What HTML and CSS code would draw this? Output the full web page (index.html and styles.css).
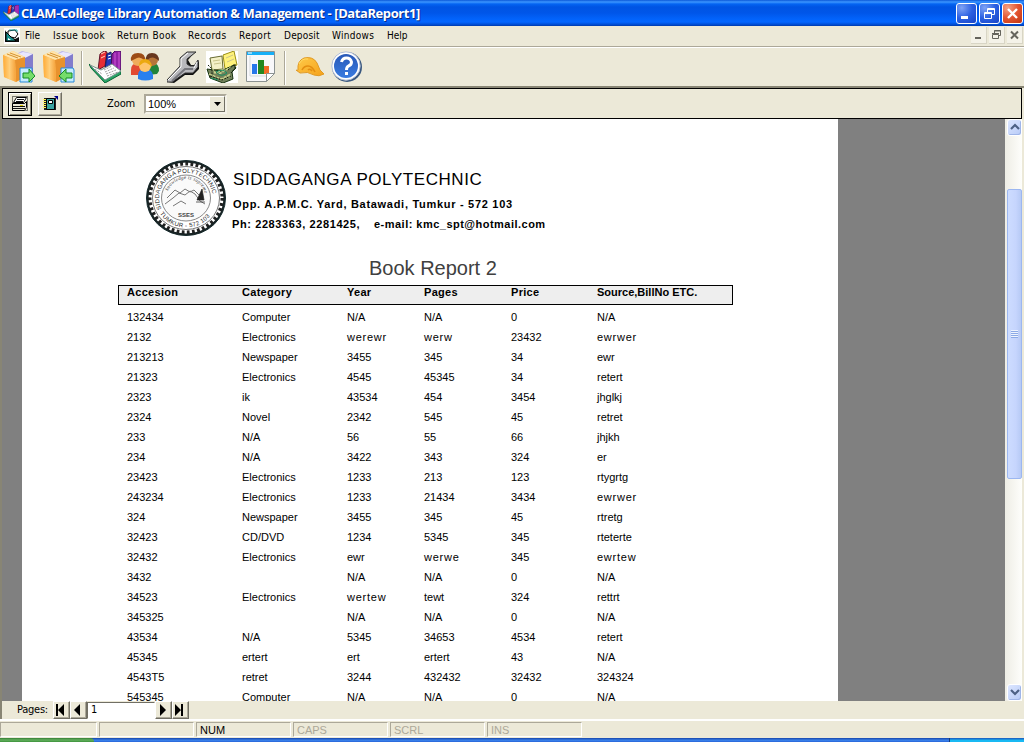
FILE: index.html
```html
<!DOCTYPE html>
<html lang="en">
<head>
<meta charset="utf-8">
<title>CLAM-College Library Automation &amp; Management</title>
<link rel="stylesheet" href="styles.css">
</head>
<body>
<div class="window">
  <header class="titlebar">
    <svg class="app-icon" width="16" height="16" viewBox="0 0 32 32"><use href="#books"/></svg>
    <span class="title">CLAM-College Library Automation &amp; Management - [DataReport1]</span>
    <div class="win-buttons">
      <span class="wb"><svg width="19" height="19"><path d="M4 12h7v3H4z" fill="#fff"/></svg></span>
      <span class="wb"><svg width="19" height="19" fill="none" stroke="#fff"><path d="M4.500 8.500h7v6h-7zM4 9.500h8M7.500 8V4.500h7v6H12M7 5.500h8"/></svg></span>
      <span class="wb close"><svg width="19" height="19"><path d="M5 5l9 9M14 5l-9 9" stroke="#fff" stroke-width="2.400"/></svg></span>
    </div>
  </header>

  <nav class="menubar">
    <svg class="doc-icon" width="16" height="16"><path fill="#fff" d="M0 0h16v16H0z"/><path d="M1 2v12h14V9L7 13z" fill="#111"/><path d="M2 4l10 9H2z" fill="#168f8c" stroke="#000"/><path d="M4 10v2h3z" fill="#fff"/><path d="M4 3l7-1 3 4-3 4-4-1-3-3z" fill="#fff" stroke="#000"/><path d="M5 2h8v2" stroke="#20a9a5" fill="none"/></svg>
    <span class="m1">File</span><span class="m2">Issue book</span><span class="m3">Return Book</span><span class="m4">Records</span><span class="m5">Report</span><span class="m6">Deposit</span><span class="m7">Windows</span><span class="m8">Help</span>
    <div class="mdi-buttons">
      <span class="mb"><svg width="16" height="17"><path d="M4 10h6v2H4z" fill="#65645c"/></svg></span>
      <span class="mb"><svg width="16" height="17" fill="none" stroke="#65645c"><path d="M3.500 7.500h6v4h-6zM3 6.500h7M5.500 6V3.500h6v5H10M5 4h7"/></svg></span>
      <span class="mb"><svg width="16" height="17"><path d="M4 4.500l7 7M11 4.500l-7 7" stroke="#65645c" stroke-width="2"/></svg></span>
    </div>
  </nav>

  <div class="toolbar">
    <svg class="tool" width="32" height="32" viewBox="0 0 32 32">
      <g id="boxes"><path d="M12 4l7-4 11 3v20l-8 5-9-5z" fill="#b9b5ee"/><path d="M12 4l8-3 10 2-7 4z" fill="#e9e7ff"/><path d="M22 7l8-4v20l-8 5z" fill="#827dcc"/><path d="M0 4l10-4 12 6v20l-9 5L1 26z" fill="#ffc76a"/><path d="M0 4l10-4 12 6-10 3z" fill="#ffe5ad"/><path d="M12 9l10-3v20l-9 5z" fill="#e8922d"/><path d="M0 4l12 5 1 22L1 26z" fill="url(#orange)"/><path d="M4 3l11 4M7 2l11 4" stroke="#d6922f" fill="none"/></g>
      <path d="M17 17h12v14H17z" fill="#c6ecff" stroke="#2788d8"/><path d="M20 22h6v-4l6 7-6 6v-4h-6z" fill="#75dd6b" stroke="#158b25"/>
    </svg>
    <svg class="tool t2" width="32" height="32" viewBox="0 0 32 32"><use href="#boxes"/><path d="M18 17h12l1 2v12H18z" fill="#c6ecff" stroke="#2788d8"/><path d="M29 22h-6v-4l-7 7 7 6v-4h6z" fill="#75dd6b" stroke="#158b25"/></svg>
    <i class="sep"></i>
    <svg class="tool t3" width="32" height="32" viewBox="0 0 32 32">
      <g id="books"><path d="M11 3l4-3 3 1-2 14-7 4z" fill="#e72e35" stroke="#61152c"/><path d="M12 3l4-2M12 7l4-2" stroke="#ffd5bd"/><path d="M18 3l4-2 1 13-7 5z" fill="#2739b8" stroke="#111a64"/><path d="M19 5l3-1M19 8l3-1" stroke="#fff"/><path d="M23 3l3-3h6v18l-6 4-4-4z" fill="#9322a8" stroke="#46105a"/><path d="M26 2v18M30 1v18" stroke="#ce57d5"/><path d="M0 13l15 14 17-8v4L16 32 2 17z" fill="#28a565" stroke="#086337"/><path d="M1 14l11 5L23 13l9 7-16 9z" fill="#fff" stroke="#78928c"/><path d="M15 19l8-4M16 21l9-4M17 23l10-4M18 25l11-4M6 18l7 5" stroke="#888" stroke-width=".8" stroke-dasharray="2 1"/></g>
    </svg>
    <svg class="tool t4" width="32" height="32" viewBox="0 0 32 32"><path d="M1 24v-5q0-7 7-7t7 7v5z" fill="#e24a32"/><circle cx="8" cy="9" r="6" fill="#efac5b"/><path d="M1 10Q0 2 8 2t7 8Q10 4 5 8z" fill="#9d4c16"/><path d="M16 21v-3q1-6 7-6t6 8l-2 3-9 1z" fill="#21843a"/><circle cx="22" cy="9" r="6" fill="#b57439"/><path d="M16 10q-1-8 6-8t7 8q-5-5-9-3z" fill="#67371f"/><path d="M8 28v-4q0-6 7-6t8 6v4q-8 3-15 0z" fill="#2980ee"/><circle cx="15" cy="15" r="6" fill="#ffc56b"/><path d="M9 15q0-7 6-7t7 8q-6-6-9-4z" fill="#eca90f"/></svg>
    <svg class="tool t5" width="32" height="32" viewBox="0 0 32 32"><path d="M1 31l14-13-1-9 8-8h6l-7 8 3 5h6l2-5v9l-6 6h-8L7 32z" fill="#111"/><path d="M0 29l13-14V7l7-6h9l-9 7v5l3 2h4l4-6v7l-5 6h-8L5 31H0z" fill="#b9b9bd" stroke="#333"/><path d="M1 29l13-13V8l7-6M27 17l3-6" stroke="#fff" fill="none"/><path d="M5 30l13-12h8" stroke="#77777d" stroke-width="2" fill="none"/></svg>
    <svg class="tool t6" width="32" height="32" viewBox="0 0 32 32"><path fill="#fff" d="M0 0h32v32H0z"/><path d="M17 4l11-4 3 14-12 4z" fill="#fff27a" stroke="#9a8e17"/><path d="M4 7l12-2 1 13-11 1z" fill="#f4f1c7" stroke="#676b32"/><path d="M7 10l7-1M8 13l7-1M20 7l7-3M21 11l7-3" stroke="#c9c48a"/><path d="M1 18l14 2 13-6 2 3-4 4 1 7-10 4-13-5z" fill="#71815a" stroke="#17320f"/><path d="M3 23l12 5 10-5M6 17l3 5 10-4M13 23l12-7M17 28l8-3" stroke="#c9d08c" stroke-width="1.500" fill="none" stroke-dasharray="3 1"/><path d="M2 14l4 4v5M22 19l7-6v4l-4 5M4 25l12 4 9-4" stroke="#101b0b" fill="none" stroke-dasharray="2 1"/><path d="M10 21q7-4 11 1q-6 5-11-1M5 27l7 2" fill="none" stroke="#178e63"/></svg>
    <svg class="tool t7" width="32" height="32" viewBox="0 0 32 32"><path d="M.5.500h28v22l-8 8H.5z" fill="#f8f8fa" stroke="#8b9291"/><path d="M1 1h27v3H1z" fill="#17aff7"/><path d="M2 2h4" stroke="#fff"/><path d="M4 5v20h20" fill="none" stroke="#d5d9dd"/><path d="M6 13h5v10H6z" fill="#2877e9"/><path d="M12 9h6v14h-6z" fill="#268720"/><path d="M18 15h5v8h-5z" fill="#f26c27"/><path d="M20.500 30.500v-8h8z" fill="#fff" stroke="#8b9291"/></svg>
    <i class="sep s2"></i>
    <svg class="tool t8" width="32" height="32" viewBox="0 0 32 32"><path d="M4 19q-1-9 6-12 9-2 13 5l3 7 4 4q-5 3-10 1-6-4-14-2l-4-3q1 1 2 0z" fill="url(#helmet)" stroke="#e09a25"/><path d="M8 19q2-4 6-4t7 6M14 19q2-2 4 1" fill="none" stroke="#e48e11" stroke-width="1.600"/><path d="M5 13q3-6 9-5" stroke="#ffdc67" fill="none"/></svg>
    <svg class="tool t9" width="32" height="32" viewBox="0 0 32 32"><circle cx="16" cy="16" r="15" fill="#38577f"/><circle cx="15" cy="15" r="14.200" fill="#fff" stroke="#b2bdd3"/><circle cx="15" cy="15" r="12" fill="url(#help)"/><path d="M10.500 11q1-4 5-4t5 4q0 3-3 4-2 1-2 4" fill="none" stroke="#fff" stroke-width="3"/><path d="M14 21h3v3h-3z" fill="#fff"/></svg>
    <svg width="0" height="0"><defs><linearGradient id="orange" x2="1"><stop stop-color="#ffab35"/><stop offset=".5" stop-color="#ffcf7b"/><stop offset="1" stop-color="#f5a037"/></linearGradient><linearGradient id="helmet" x2="1" y2="1"><stop stop-color="#ffca49"/><stop offset="1" stop-color="#f5a21b"/></linearGradient><linearGradient id="help" x2="0" y2="1"><stop stop-color="#2858b7"/><stop offset="1" stop-color="#397be0"/></linearGradient></defs></svg>
  </div>

  <section class="report">
    <div class="report-bar">
      <span class="rb print"><svg width="22" height="22"><path d="M3.500 3.500h15v14h-15z" fill="none" stroke="#000" stroke-dasharray="1 1"/><path d="M7.500 4.500h10l-3 5h-10z" fill="#fff" stroke="#000"/><path d="M3.500 10.500h12l2-2v6l-2 3h-12z" fill="#ece9d8" stroke="#000"/><path d="M8 6.500h7M7 8.500h7M4 13.500h12M4 15.500h12" stroke="#111"/><path d="M11 12.500h3" stroke="#d8c300"/></svg></span>
      <span class="rb export"><svg width="22" height="22"><path d="M5 5h12v12H5z" fill="#222"/><path d="M7.500 5.500h8v11h-8z" fill="#39a3a1" stroke="#000"/><path d="M9.500 7.500h4v3h-4z" fill="#fff" stroke="#000"/><path d="M4 6.500h3M4 8.500h3M4 10.500h3M4 12.500h3M4 14.500h3" stroke="#fff35a"/><path d="M15 3h4v4z" fill="#00008c"/></svg></span>
      <label class="zoom-label">Zoom</label>
      <div class="combo"><span>100%</span><b><svg width="14" height="14"><path d="M4 5h7L7.500 9z"/></svg></b></div>
    </div>
    <div class="viewer">
      <main class="canvas"><article class="page">
        <div class="letterhead">
          <svg class="seal" width="82" height="78" viewBox="0 0 82 78">
            <defs><path id="arc" d="M16.500 50A27 25.500 0 1 1 65.500 50"/><path id="low" d="M13 51A30.500 29 0 0 0 69 51"/><path id="inner" d="M22 38A19 18 0 0 1 60 38"/></defs>
            <ellipse cx="41" cy="39" rx="39.500" ry="37.500" fill="#fff" stroke="#163034"/><ellipse cx="41" cy="39" rx="36.500" ry="34.500" fill="none" stroke="#222" stroke-width="4" stroke-dasharray="2.800 2.400"/><ellipse cx="41" cy="39" rx="38.500" ry="36.500" fill="none" stroke="#172324" stroke-width="2"/><ellipse cx="41" cy="39" rx="33.500" ry="31.500" fill="#fff" stroke="#777"/><ellipse cx="41" cy="39" rx="24.500" ry="23" fill="#fafafa" stroke="#888"/>
            <text class="seal-text"><textPath href="#arc">SIDDAGANGA POLYTECHNIC</textPath></text><text class="seal-low"><textPath href="#low" startOffset="4">TUMKUR - 572 103</textPath></text><text class="seal-small"><textPath href="#inner" startOffset="6">knowledge is supreme</textPath></text>
            <path d="M20 45l8-6 6-5 6 2 5-4 5 3 5 7 5 3M22 39l8-8 5 3 5-4 5 3 4-2 5 5M28 47l8-5 5 3" fill="none" stroke="#777"/><path d="M57 30l-5 11h7zM51 43h9" fill="#222" stroke="#222" stroke-width=".7"/><text class="seal-sses" x="33" y="58">SSES</text>
          </svg>
          <div class="college"><h1>SIDDAGANGA POLYTECHNIC</h1><p class="addr">Opp. A.P.M.C. Yard, Batawadi, Tumkur - 572 103</p><p class="phone"><span class="tel">Ph: 2283363, 2281425,</span><span>e-mail: kmc_spt@hotmail.com</span></p></div>
        </div>
        <h2>Book Report 2</h2>
        <div class="row head"><span>Accesion</span><span>Category</span><span>Year</span><span>Pages</span><span>Price</span><span class="source">Source,BillNo ETC.</span></div>
        <div class="rows">
          <div class="row"><span>132434</span><span>Computer</span><span>N/A</span><span>N/A</span><span>0</span><span>N/A</span></div>
          <div class="row"><span>2132</span><span>Electronics</span><span class="wide">werewr</span><span class="wide">werw</span><span>23432</span><span class="wide">ewrwer</span></div>
          <div class="row"><span>213213</span><span>Newspaper</span><span>3455</span><span>345</span><span>34</span><span>ewr</span></div>
          <div class="row"><span>21323</span><span>Electronics</span><span>4545</span><span>45345</span><span>34</span><span>retert</span></div>
          <div class="row"><span>2323</span><span>ik</span><span>43534</span><span>454</span><span>3454</span><span>jhglkj</span></div>
          <div class="row"><span>2324</span><span>Novel</span><span>2342</span><span>545</span><span>45</span><span>retret</span></div>
          <div class="row"><span>233</span><span>N/A</span><span>56</span><span>55</span><span>66</span><span>jhjkh</span></div>
          <div class="row"><span>234</span><span>N/A</span><span>3422</span><span>343</span><span>324</span><span>er</span></div>
          <div class="row"><span>23423</span><span>Electronics</span><span>1233</span><span>213</span><span>123</span><span>rtygrtg</span></div>
          <div class="row"><span>243234</span><span>Electronics</span><span>1233</span><span>21434</span><span>3434</span><span class="wide">ewrwer</span></div>
          <div class="row"><span>324</span><span>Newspaper</span><span>3455</span><span>345</span><span>45</span><span>rtretg</span></div>
          <div class="row"><span>32423</span><span>CD/DVD</span><span>1234</span><span>5345</span><span>345</span><span>rteterte</span></div>
          <div class="row"><span>32432</span><span>Electronics</span><span>ewr</span><span class="wide">werwe</span><span>345</span><span class="wide">ewrtew</span></div>
          <div class="row"><span>3432</span><span></span><span>N/A</span><span>N/A</span><span>0</span><span>N/A</span></div>
          <div class="row"><span>34523</span><span>Electronics</span><span class="wide">wertew</span><span>tewt</span><span>324</span><span>rettrt</span></div>
          <div class="row"><span>345325</span><span></span><span>N/A</span><span>N/A</span><span>0</span><span>N/A</span></div>
          <div class="row"><span>43534</span><span>N/A</span><span>5345</span><span>34653</span><span>4534</span><span>retert</span></div>
          <div class="row"><span>45345</span><span>ertert</span><span>ert</span><span>ertert</span><span>43</span><span>N/A</span></div>
          <div class="row"><span>4543T5</span><span>retret</span><span>3244</span><span>432432</span><span>32432</span><span>324324</span></div>
          <div class="row"><span>545345</span><span>Computer</span><span>N/A</span><span>N/A</span><span>0</span><span>N/A</span></div>
        </div>
      </article></main>
      <aside class="scrollbar"><span class="sb"><svg width="14" height="14"><path d="M3 9l4-4 4 4" fill="none" stroke="#4d6185" stroke-width="2.200"/></svg></span><span class="thumb"><i></i></span><span class="sb"><svg width="14" height="14"><path d="M3 5l4 4 4-4" fill="none" stroke="#4d6185" stroke-width="2.200"/></svg></span></aside>
    </div>
    <div class="pager"><span class="pages-label">Pages:</span>
      <b><svg width="15" height="15"><path d="M2 2h2v12H2zM10 2v12L4 8z"/></svg></b><b><svg width="15" height="15"><path d="M9 2v12L3 8z"/></svg></b>
      <span class="page-no">1</span>
      <b><svg width="15" height="15"><path d="M4 2v12l6-6z"/></svg></b><b><svg width="15" height="15"><path d="M2 2v12l6-6zM8 2h2v12H8z"/></svg></b>
    </div>
  </section>
  <footer class="status"><span></span><span></span><span class="on">NUM</span><span>CAPS</span><span>SCRL</span><span>INS</span></footer>
  <div class="taskbar"><i class="start"></i><i class="tray"></i></div>
</div>
</body>
</html>
```
FILE: styles.css
```css
* { box-sizing: border-box; }
body { margin: 0; overflow: hidden; background: #ece9d8; font: 10px/14px "DejaVu Sans Condensed", "DejaVu Sans", sans-serif; color: #000; }
svg { display: block; flex: none; }
.window { width: 1024px; height: 742px; display: flex; flex-direction: column; overflow: hidden; background: #ece9d8; }

.titlebar { height: 26px; flex: none; display: flex; align-items: center; padding: 0 1px 0 3px; background: linear-gradient(#0b58d8 0, #3c96ff 2px, #0464f2 4px, #0054e3 7px, #0056e9 13px, #0263fb 19px, #0466ff 22px, #0048cb 25px, #0039a8 26px); }
.title { margin-left: 2px; font: bold 13px/18px "Open Sans", sans-serif; letter-spacing: -.42px; color: #fff; text-shadow: 1px 1px #0a2a83; white-space: nowrap; }
.win-buttons { margin-left: auto; display: flex; gap: 2px; }
.wb { width: 21px; height: 21px; border: 1px solid #fff; border-radius: 3px; background: radial-gradient(circle at 25% 20%, #7fa3f5, #2c60e2 50%, #1743c5); }
.wb.close { background: radial-gradient(circle at 25% 20%, #f4a183, #e35430 50%, #bf3410); }

.menubar { height: 19px; flex: none; display: flex; align-items: center; padding-left: 4px; white-space: nowrap; }
.menubar > span { flex: none; }
.m1 { width: 28px; margin-left: 5px; }
.m2 { width: 64px; }
.m2, .m3, .m4 { letter-spacing: .4px; }
.m3 { width: 71px; }
.m4 { width: 51px; }
.m5 { width: 45px; letter-spacing: .4px; }
.m6 { width: 48px; letter-spacing: .2px; }
.m7 { width: 55px; letter-spacing: .3px; }
.mdi-buttons { margin-left: auto; display: flex; gap: 2px; padding-right: 1px; }
.mb { width: 16px; height: 17px; background: #f4f2e8; border: solid #fff; border-width: 0 1px 1px 0; border-right-color: #d8d5c5; border-bottom-color: #d8d5c5; }

.toolbar { height: 43px; flex: none; display: flex; align-items: flex-start; padding: 6px 0 0 3px; border-bottom: 2px solid #888574; background: linear-gradient(#ece9d8 1px, #aca899 1px, #aca899 2px, #fff 2px, #fff 3px, #ece9d8 3px); }
.t2 { margin-left: 8px; }
.sep { width: 2px; height: 34px; margin-left: 6px; background: linear-gradient(90deg, #aca899 50%, #fff 50%); }
.t3 { margin-left: 6px; }
.t4 { margin-left: 9px; }
.t5 { margin-left: 5px; }
.t6 { margin-left: 7px; }
.t7 { margin-left: 8px; }
.s2 { margin-left: 6px; }
.t8 { margin-left: 8px; }
.t9 { margin-left: 5px; }

.report { height: 631px; flex: none; display: flex; flex-direction: column; border-left: 2px solid #888574; padding-right: 2px; }
.report-bar { height: 31px; flex: none; display: flex; align-items: center; padding-left: 5px; border: 1px solid #000; background: #ece9d8; font-size: 11px; }
.rb { width: 24px; height: 24px; border: 1px solid; border-color: #fff #716f64 #716f64 #fff; box-shadow: inset -1px -1px #aca899; }
.rb.print { border-color: #000; box-shadow: inset 1px 1px #fff, inset -1px -1px #85826f; }
.rb.export { margin-left: 6px; }
.zoom-label { width: 37px; margin-left: 45px; letter-spacing: -.1px; }
.combo { width: 83px; height: 20px; display: flex; align-items: center; background: #fff; border: 2px solid; border-color: #aca899 #f4f2e8 #f4f2e8 #aca899; padding-left: 2px; font: 11px/14px "Liberation Sans", sans-serif; box-shadow: inset -1px -1px #aca899; }
.combo b { width: 16px; height: 16px; margin-left: auto; background: #ece9d8; border: 1px solid; border-color: #fff #716f64 #716f64 #fff; }

.viewer { height: 582px; flex: none; display: flex; }
.canvas { flex: 1; background: #808080; padding-left: 20px; overflow: hidden; }
.page { width: 816px; height: 582px; background: #fff; overflow: hidden; font: 11px/20px "Liberation Sans", sans-serif; display: flex; flex-direction: column; }
.letterhead { height: 139px; flex: none; display: flex; padding: 40px 0 0 123px; }
.college { margin-left: 6px; white-space: nowrap; }
h1, h2, p { margin: 0; }
h1 { font: 17px/22px "Liberation Sans", sans-serif; padding-top: 10px; letter-spacing: .57px; }
.addr { font: bold 11px/20px "Liberation Sans", sans-serif; padding-top: 3px; letter-spacing: .71px; }
.phone { font: bold 11px/20px "Liberation Sans", sans-serif; display: flex; margin-left: -1px; letter-spacing: .48px; }
.tel { width: 142px; letter-spacing: .6px; }
.seal-text { font: 6px "Liberation Sans", sans-serif; letter-spacing: .25px; fill: #222; }
.seal-low { font: 6px "Liberation Sans", sans-serif; letter-spacing: .35px; fill: #222; }
.seal-small { font: italic 5px "Liberation Serif", serif; letter-spacing: .2px; fill: #333; }
.seal-sses { font: bold 6px "Liberation Sans", sans-serif; fill: #444; }
h2 { font: 20px/24px "Liberation Sans", sans-serif; color: #404040; margin: -2px 0 5px 347px; height: 24px; white-space: nowrap; }
.row { display: grid; grid-template-columns: 115px 105px 77px 87px 86px 130px; height: 20px; padding-left: 105px; white-space: nowrap; }
.row.head { flex: none; width: 615px; margin-left: 96px; padding-left: 8px; background: #eee; border: 1px solid #000; font-weight: bold; line-height: 13px; letter-spacing: .3px; }
.row .source { letter-spacing: 0; }
.row .wide { letter-spacing: .75px; }
.rows { margin-top: 2px; }

.scrollbar { width: 17px; display: flex; flex-direction: column; align-items: center; padding-left: 1px; background: linear-gradient(90deg, #eeede5, #fefefb); }
.sb { width: 15px; height: 17px; flex: none; border: 1px solid #fff; border-radius: 3px; background: linear-gradient(135deg, #dce6ff, #b8cbf7); box-shadow: inset -1px -1px #9fb5e8; }
.thumb { width: 15px; height: 290px; margin: 53px 0 auto; border: 1px solid #9cb7f1; border-radius: 2px; background: linear-gradient(90deg, #cddcff, #c6d5fd 60%, #b7caf5); display: flex; align-items: center; justify-content: center; }
.thumb i { width: 7px; height: 8px; background: repeating-linear-gradient(#eef4fe 0 1px, #8caae6 1px 2px); }

.pager { height: 18px; flex: none; display: flex; align-items: center; padding-left: 15px; font-size: 11px; }
.pages-label { width: 36px; letter-spacing: -.25px; }
.pager b { width: 17px; height: 18px; border: 1px solid; border-color: #fff #716f64 #716f64 #fff; box-shadow: inset -1px -1px #aca899; }
.page-no { width: 68px; height: 17px; background: #fff; border: 1px solid; border-color: #716f64 #fff #fff #716f64; padding-left: 3px; }

.status { height: 19px; flex: none; display: flex; align-items: flex-end; gap: 2px; border-top: 2px solid #fff; padding-bottom: 1px; font: 11px/14px "Liberation Sans", sans-serif; color: #aca899; }
.status span { width: 95px; height: 15px; padding-left: 3px; border: 1px solid; border-color: #aca899 #fff #fff #aca899; }
.status span:first-child { width: 97px; }
.status .on { color: #000; }
.taskbar { height: 4px; flex: none; display: flex; justify-content: space-between; background: linear-gradient(#1e52b8 1px, #3d87ee 2px, #2864d8); }
.start { width: 94px; background: linear-gradient(#357d35, #63b05d 50%, #3c913c); border-radius: 0 4px 0 0; }
.tray { width: 75px; background: linear-gradient(#1b69c6 1px, #19b9f3 2px); border-left: 1px solid #153a76; }
```
